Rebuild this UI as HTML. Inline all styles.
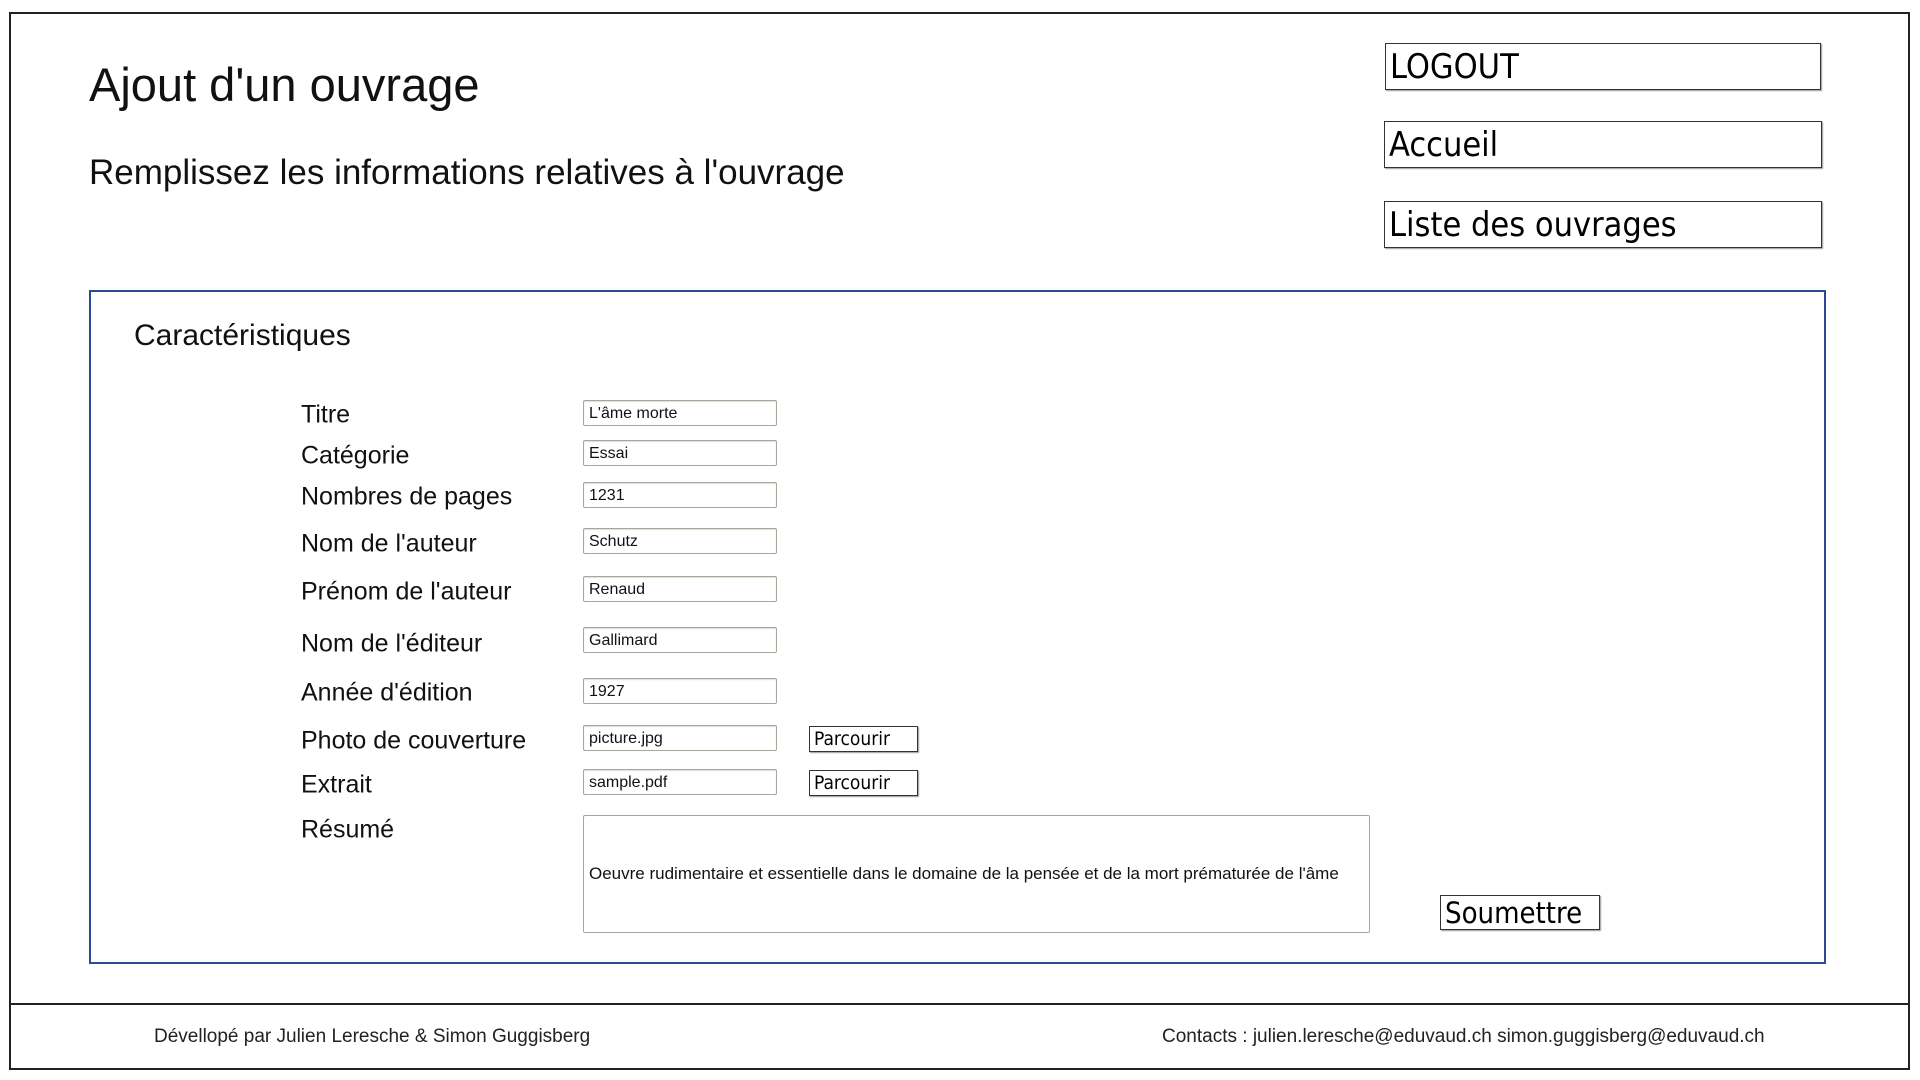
<!DOCTYPE html>
<html><head><meta charset="utf-8"><style>
*{margin:0;padding:0;box-sizing:border-box}
body{width:1920px;height:1080px;background:#fff;position:relative;font-family:"Liberation Sans",Arial,sans-serif;color:#111;overflow:hidden}
.a{position:absolute;white-space:nowrap}
.frame{left:9px;top:12px;width:1901px;height:1058px;border:2px solid #222;border-top-width:2px}
.sep{left:9px;top:1003px;width:1901px;height:0;border-top:2px solid #222}
.btn{border:1.5px solid #333;font-family:"Comic Sans MS","DejaVu Sans Condensed","DejaVu Sans",cursive;color:#000;padding-left:4px;display:flex;align-items:center;box-shadow:1px 1px 1px #999}
.box{left:89px;top:290px;width:1737px;height:674px;border:2px solid #2e4a96}
.lbl{font-size:25px;left:301px;transform:translateY(-50%)}
.in{left:583px;width:194px;height:26px;border:1.5px solid #aaa59c;border-radius:2px;font-size:16px;padding-left:5px;line-height:25px;transform:translateY(-50%);box-shadow:inset 0 1px 1px #ddd}
.pb{left:809px;width:109px;height:26px;font-size:19px;transform:translateY(-50%)}
</style></head><body>
<div class="a frame"></div>
<div class="a sep"></div>
<div class="a" style="left:89px;top:57px;font-size:47px">Ajout d'un ouvrage</div>
<div class="a" style="left:89px;top:153px;font-size:35px">Remplissez les informations relatives à l'ouvrage</div>
<div class="a btn" style="left:1385px;top:43px;width:436px;height:47px;font-size:34px">LOGOUT</div>
<div class="a btn" style="left:1384px;top:121px;width:438px;height:47px;font-size:34px">Accueil</div>
<div class="a btn" style="left:1384px;top:201px;width:438px;height:47px;font-size:34px">Liste des ouvrages</div>
<div class="a box"></div>
<div class="a" style="left:134px;top:319px;font-size:30px">Caractéristiques</div>
<div class="a lbl" style="top:415px">Titre</div>
<div class="a lbl" style="top:456px">Catégorie</div>
<div class="a lbl" style="top:497px">Nombres de pages</div>
<div class="a lbl" style="top:544px">Nom de l'auteur</div>
<div class="a lbl" style="top:592px">Prénom de l'auteur</div>
<div class="a lbl" style="top:644px">Nom de l'éditeur</div>
<div class="a lbl" style="top:693px">Année d'édition</div>
<div class="a lbl" style="top:741px">Photo de couverture</div>
<div class="a lbl" style="top:785px">Extrait</div>
<div class="a lbl" style="top:830px">Résumé</div>
<div class="a in" style="top:413px">L'âme morte</div>
<div class="a in" style="top:453px">Essai</div>
<div class="a in" style="top:495px">1231</div>
<div class="a in" style="top:541px">Schutz</div>
<div class="a in" style="top:589px">Renaud</div>
<div class="a in" style="top:640px">Gallimard</div>
<div class="a in" style="top:691px">1927</div>
<div class="a in" style="top:738px">picture.jpg</div>
<div class="a in" style="top:782px">sample.pdf</div>
<div class="a btn pb" style="top:739px">Parcourir</div>
<div class="a btn pb" style="top:783px">Parcourir</div>
<div class="a" style="left:583px;top:815px;width:787px;height:118px;border:1.5px solid #aaa59c;border-radius:2px;font-size:17px;padding-left:5px;display:flex;align-items:center">Oeuvre rudimentaire et essentielle dans le domaine de la pensée et de la mort prématurée de l'âme</div>
<div class="a btn" style="left:1440px;top:895px;width:160px;height:35px;font-size:29px">Soumettre</div>
<div class="a" style="left:154px;top:1026px;font-size:19px;color:#222">Dévellopé par Julien Leresche &amp; Simon Guggisberg</div>
<div class="a" style="left:1162px;top:1026px;font-size:19px;color:#222">Contacts : julien.leresche@eduvaud.ch simon.guggisberg@eduvaud.ch</div>
</body></html>
